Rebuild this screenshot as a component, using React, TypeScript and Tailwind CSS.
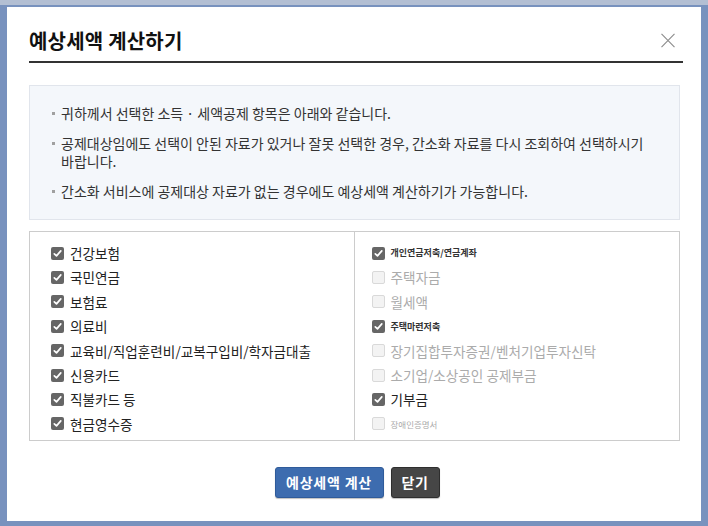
import React from "react";

type Row = {
  label: string;
  checked: boolean;
  disabled?: boolean;
  small?: boolean;
};

const leftRows: Row[] = [
  { label: "건강보험", checked: true },
  { label: "국민연금", checked: true },
  { label: "보험료", checked: true },
  { label: "의료비", checked: true },
  { label: "교육비/직업훈련비/교복구입비/학자금대출", checked: true },
  { label: "신용카드", checked: true },
  { label: "직불카드 등", checked: true },
  { label: "현금영수증", checked: true },
];

const rightRows: Row[] = [
  { label: "개인연금저축/연금계좌", checked: true, small: true },
  { label: "주택자금", checked: false, disabled: true },
  { label: "월세액", checked: false, disabled: true },
  { label: "주택마련저축", checked: true, small: true },
  { label: "장기집합투자증권/벤처기업투자신탁", checked: false, disabled: true },
  { label: "소기업/소상공인 공제부금", checked: false, disabled: true },
  { label: "기부금", checked: true },
  { label: "장애인증명서", checked: false, disabled: true, small: true },
];

const notices = [
  "귀하께서 선택한 소득 · 세액공제 항목은 아래와 같습니다.",
  "공제대상임에도 선택이 안된 자료가 있거나 잘못 선택한 경우, 간소화 자료를 다시 조회하여 선택하시기 바랍니다.",
  "간소화 서비스에 공제대상 자료가 없는 경우에도 예상세액 계산하기가 가능합니다.",
];

function Box({ checked, disabled }: { checked: boolean; disabled?: boolean }) {
  if (checked) {
    return (
      <span className="flex h-[13px] w-[13px] shrink-0 items-center justify-center rounded-[2px] bg-[#666666]">
        <svg width="9" height="9" viewBox="0 0 9 9" fill="none">
          <path d="M1.3 4.8 L3.5 6.9 L7.8 1.9" stroke="#ffffff" strokeWidth="1.7" strokeLinecap="round" strokeLinejoin="round" />
        </svg>
      </span>
    );
  }
  return (
    <span
      className={
        disabled
          ? "h-[13px] w-[13px] shrink-0 rounded-[2px] border border-[#d9d9d9] bg-[#f3f3f3]"
          : "h-[13px] w-[13px] shrink-0 rounded-[2px] border border-[#999] bg-white"
      }
    />
  );
}

function CheckRow({ row }: { row: Row }) {
  let text = "text-[13.6px] text-[#222]";
  if (row.small && row.checked) text = "text-[9px] font-bold text-[#333]";
  else if (row.small) text = "text-[8.5px] text-[#aaa]";
  else if (row.disabled) text = "text-[13.6px] text-[#ababab]";

  return (
    <label className="flex h-[24.4px] items-center gap-[6px]">
      <Box checked={row.checked} disabled={row.disabled} />
      <span className={text}>{row.label}</span>
    </label>
  );
}

export default function App() {
  return (
    <div className="h-[526px] w-[708px] bg-[linear-gradient(#b3bfd3_0,#b3bfd3_5px,#7892be_5px)] p-[7px] font-['Noto_Sans_CJK_KR','Noto_Sans',sans-serif]">
      <div className="flex h-[514px] w-[694px] flex-col bg-white pl-[22px] pr-[21px]">
        {/* header */}
        <div className="-mr-[3px] flex items-center justify-between border-b-2 border-[#333] pb-[7px] pt-[20px]">
          <h1 className="text-[20px] font-bold leading-[27px] tracking-[0.2px] text-[#111]">
            예상세액 계산하기
          </h1>
          <button className="mr-[7px] flex h-[16px] w-[16px] items-center justify-center">
            <svg width="14" height="15" viewBox="0 0 14 15" fill="none">
              <path d="M0.5 0.8 L13.5 14.2 M13.5 0.8 L0.5 14.2" stroke="#8c8c8c" strokeWidth="1.1" />
            </svg>
          </button>
        </div>

        {/* notice box */}
        <div className="mt-[22px] flex flex-col gap-[12px] border border-[#e1e5ec] bg-[#f4f7fb] pb-[19px] pl-[22px] pr-[20px] pt-[18px]">
          {notices.map((n) => (
            <div key={n} className="flex items-start text-[14px] leading-[18px] text-[#333]">
              <span className="mr-[6px] mt-[8px] h-[3px] w-[3px] shrink-0 bg-[#a0a0a0]" />
              <p>{n}</p>
            </div>
          ))}
        </div>

        {/* selected items */}
        <div className="mt-[11px] grid grid-cols-2 border border-[#cccccc]">
          <div className="border-r border-[#cccccc] pb-[4px] pl-[21px] pt-[9px]">
            {leftRows.map((r) => (
              <CheckRow key={r.label} row={r} />
            ))}
          </div>
          <div className="pb-[4px] pl-[17px] pt-[9px]">
            {rightRows.map((r) => (
              <CheckRow key={r.label} row={r} />
            ))}
          </div>
        </div>

        {/* actions */}
        <div className="mt-[26px] flex justify-center gap-[7px] pl-[5px]">
          <button className="h-[31px] w-[109px] rounded-[3px] border border-[#2f5b9a] bg-[#3d6caf] text-[14px] font-bold tracking-[0.8px] text-white shadow-[0_1px_1px_rgba(0,0,0,0.25)]">
            예상세액 계산
          </button>
          <button className="h-[31px] w-[49px] rounded-[3px] border border-[#2e2e2e] bg-[#464646] text-[14px] font-bold tracking-[0.5px] text-white shadow-[0_1px_1px_rgba(0,0,0,0.25)]">
            닫기
          </button>
        </div>
      </div>
    </div>
  );
}
